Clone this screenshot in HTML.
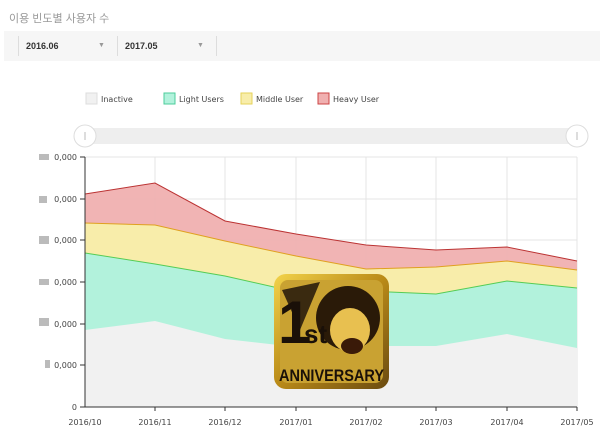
<!DOCTYPE html>
<html><head><meta charset="utf-8"><style>
body{margin:0;width:600px;height:438px;background:#fff;overflow:hidden;font-family:"Liberation Sans","Noto Sans CJK KR",sans-serif;position:relative}
.t{position:absolute;left:9px;top:10px;font-size:11px;color:#999}
.bar{position:absolute;left:4px;top:31px;width:596px;height:30px;background:#f6f6f6}
.sel{position:absolute;top:36px;height:20px;border-left:1px solid #ddd;font-size:9px;font-weight:bold;color:#333;line-height:20px}
</style></head><body>
<div class="t">이용 빈도별 사용자 수</div>
<div class="bar"></div>
<div class="sel" style="left:18px;width:98px;padding-left:7px">2016.06<span style="position:absolute;left:79px;color:#999;font-size:7px">▼</span></div>
<div class="sel" style="left:117px;width:98px;padding-left:7px">2017.05<span style="position:absolute;left:79px;color:#999;font-size:7px">▼</span></div>
<div class="sel" style="left:216px;width:1px"></div>
<svg width="600" height="438" style="position:absolute;left:0;top:0" font-family="DejaVu Sans, sans-serif">
<g font-size="8" fill="#444">
<rect x="86" y="93" width="11" height="11" fill="#f1f1f1" stroke="#ddd"/><text x="101" y="102">Inactive</text>
<rect x="164" y="93" width="11" height="11" fill="#b2f2dc" stroke="#4ccc9b"/><text x="179" y="102">Light Users</text>
<rect x="241" y="93" width="11" height="11" fill="#f8edaa" stroke="#e6d25a"/><text x="256" y="102">Middle User</text>
<rect x="318" y="93" width="11" height="11" fill="#f0b0b0" stroke="#c44"/><text x="333" y="102">Heavy User</text>
</g>
<rect x="85" y="128" width="492" height="16" rx="8" fill="#eee"/>
<circle cx="85" cy="136" r="11" fill="#fff" stroke="#ddd"/><line x1="85" y1="132" x2="85" y2="140" stroke="#bbb"/>
<circle cx="577" cy="136" r="11" fill="#fff" stroke="#ddd"/><line x1="577" y1="132" x2="577" y2="140" stroke="#bbb"/>
<g stroke="#e4e4e4">
<line x1="85" y1="157" x2="577" y2="157"/><line x1="85" y1="199" x2="577" y2="199"/><line x1="85" y1="240" x2="577" y2="240"/><line x1="85" y1="282" x2="577" y2="282"/><line x1="85" y1="324" x2="577" y2="324"/><line x1="85" y1="365" x2="577" y2="365"/>
<line x1="155" y1="157" x2="155" y2="407"/><line x1="225" y1="157" x2="225" y2="407"/><line x1="296" y1="157" x2="296" y2="407"/><line x1="366" y1="157" x2="366" y2="407"/><line x1="436" y1="157" x2="436" y2="407"/><line x1="507" y1="157" x2="507" y2="407"/><line x1="577" y1="157" x2="577" y2="407"/>
</g>
<polygon fill="#f0b0b0" opacity=".95" points="85,194 155,183 225,221 296,234 366,245 436,250 507,247 577,261 577,407 85,407"/>
<polygon fill="#f8edaa" points="85,223 155,225 225,241 296,256 366,269 436,267 507,261 577,270 577,407 85,407"/>
<polygon fill="#b2f2dc" points="85,253 155,264 225,276 296,292 366,291 436,294 507,281 577,288 577,407 85,407"/>
<polygon fill="#f1f1f1" points="85,330 155,321 225,339 296,347 366,346 436,346 507,334 577,348 577,407 85,407"/>
<polyline fill="none" stroke="#b33" points="85,194 155,183 225,221 296,234 366,245 436,250 507,247 577,261"/>
<polyline fill="none" stroke="#e0a020" points="85,223 155,225 225,241 296,256 366,269 436,267 507,261 577,270"/>
<polyline fill="none" stroke="#5c5" points="85,253 155,264 225,276 296,292 366,291 436,294 507,281 577,288"/>
<line x1="85" y1="157" x2="85" y2="407" stroke="#333"/><line x1="85" y1="407" x2="577" y2="407" stroke="#333"/>
<g stroke="#333"><line x1="80" y1="157" x2="85" y2="157"/><line x1="80" y1="199" x2="85" y2="199"/><line x1="80" y1="240" x2="85" y2="240"/><line x1="80" y1="282" x2="85" y2="282"/><line x1="80" y1="324" x2="85" y2="324"/><line x1="80" y1="365" x2="85" y2="365"/><line x1="80" y1="407" x2="85" y2="407"/>
<line x1="155" y1="407" x2="155" y2="411"/><line x1="225" y1="407" x2="225" y2="411"/><line x1="296" y1="407" x2="296" y2="411"/><line x1="366" y1="407" x2="366" y2="411"/><line x1="436" y1="407" x2="436" y2="411"/><line x1="507" y1="407" x2="507" y2="411"/><line x1="577" y1="407" x2="577" y2="411"/></g>
<g font-size="8" fill="#444" text-anchor="end">
<text x="77" y="160">0,000</text><text x="77" y="202">0,000</text><text x="77" y="243">0,000</text><text x="77" y="285">0,000</text><text x="77" y="327">0,000</text><text x="77" y="368">0,000</text><text x="77" y="410">0</text></g>
<g fill="#bbb"><rect x="39" y="154" width="10" height="6"/><rect x="39" y="196" width="8" height="7"/><rect x="39" y="236" width="10" height="8"/><rect x="39" y="279" width="10" height="6"/><rect x="39" y="318" width="10" height="8"/><rect x="45" y="360" width="5" height="8"/></g>
<g font-size="8" fill="#444" text-anchor="middle">
<text x="85" y="425">2016/10</text><text x="155" y="425">2016/11</text><text x="225" y="425">2016/12</text><text x="296" y="425">2017/01</text><text x="366" y="425">2017/02</text><text x="436" y="425">2017/03</text><text x="507" y="425">2017/04</text><text x="577" y="425">2017/05</text></g>
<defs><linearGradient id="g" x1="0" y1="0" x2="1" y2="1"><stop offset="0" stop-color="#f3d34a"/><stop offset=".5" stop-color="#b98a18"/><stop offset="1" stop-color="#6a4a10"/></linearGradient></defs>
<rect x="274" y="274" width="115" height="115" rx="12" fill="url(#g)"/>
<rect x="280" y="280" width="103" height="103" rx="8" fill="#c9a232"/>
<path d="M282 290 L320 282 L300 330 Z" fill="#3a2a10"/>
<circle cx="348" cy="318" r="32" fill="#2a1a08"/>
<ellipse cx="350" cy="330" rx="20" ry="22" fill="#e8c050"/>
<ellipse cx="352" cy="346" rx="11" ry="8" fill="#3a1a08"/>
<text x="278" y="343" font-family="Liberation Sans, sans-serif" font-weight="bold" font-size="60" fill="#1a1008">1</text>
<text x="304" y="343" font-family="Liberation Sans, sans-serif" font-weight="bold" font-size="26" fill="#1a1008">st</text>
<text x="279" y="381" font-family="Liberation Sans, sans-serif" font-weight="bold" font-size="17" fill="#1a1008" textLength="105" lengthAdjust="spacingAndGlyphs">ANNIVERSARY</text>
</svg>
</body></html>
